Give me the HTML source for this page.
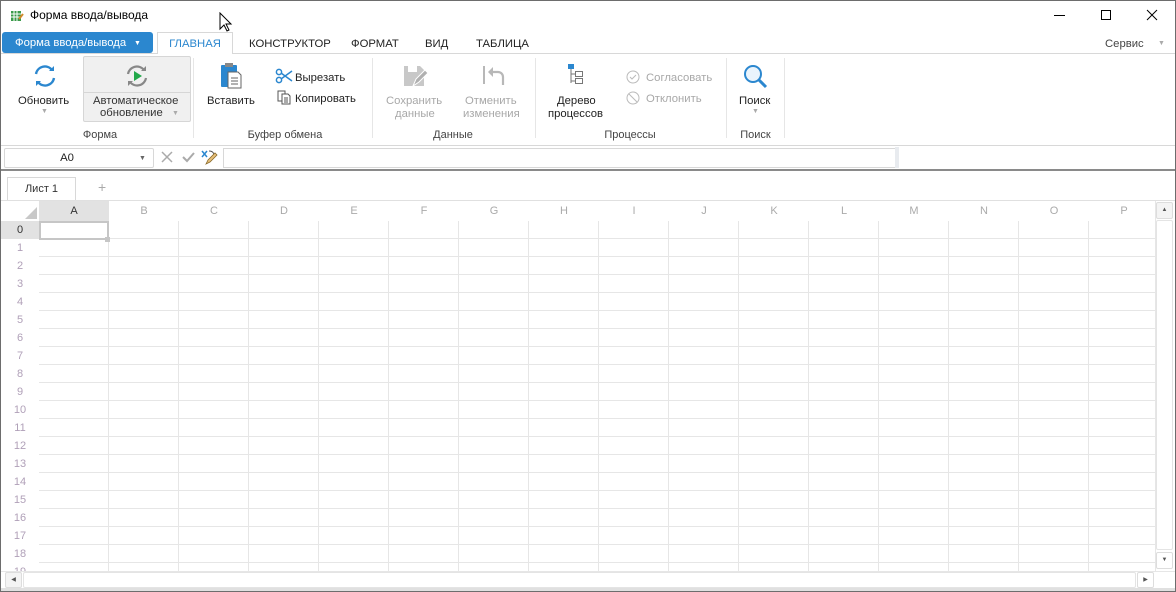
<!DOCTYPE html>
<html><head><meta charset="utf-8"><style>
*{box-sizing:border-box;margin:0;padding:0}
body{width:1176px;height:592px;overflow:hidden;background:#fff;font-family:"Liberation Sans","DejaVu Sans",sans-serif;font-size:11.3px;color:#222;position:relative}
.a{position:absolute}
.win{left:0;top:0;width:1176px;height:592px;border:1px solid #6d6d6d}
.t{white-space:nowrap}
.g{color:#a8a8a8}
.lab{color:#444;font-size:11px;text-align:center}
.sep{width:1px;background:#e6e6e6;top:58px;height:80px}
.ch{top:201px;width:70px;height:20px;line-height:20px;text-align:center;color:#aaa;font-size:11px}
.rh{left:1px;width:38px;height:18px;line-height:18px;text-align:center;color:#b0a0b8;font-size:11px}
</style></head><body>
<div class="a win"></div>
<svg class="a" style="left:10px;top:9px" width="14" height="14" viewBox="0 0 14 14"><rect x="1" y="2" width="10" height="10" fill="#3a9a4a"/><path d="M1 5h10M1 8h10M4 2v10M7 2v10" stroke="#fff" stroke-width="1"/><path d="M9 10l4-5" stroke="#d08a2a" stroke-width="2"/></svg>
<div class="a t" style="left:30px;top:8px;font-size:12px;color:#000">Форма ввода/вывода</div>
<svg class="a" style="left:219px;top:12px" width="14" height="22"><path d="M1 1v16l4-4 3 6 2-1-3-6h5z" fill="#fff" stroke="#000"/></svg>
<div class="a" style="left:1054px;top:15px;width:11px;height:1px;background:#000"></div>
<div class="a" style="left:1101px;top:10px;width:10px;height:10px;border:1px solid #000"></div>
<svg class="a" style="left:1146px;top:9px" width="12" height="12"><path d="M1 1l10 10M11 1L1 11" stroke="#000" stroke-width="1"/></svg>
<div class="a t" style="left:2px;top:32px;width:151px;height:21px;background:#2b87cf;border-radius:3px;color:#fff;line-height:22px;padding-left:13px">Форма ввода/вывода</div>
<div class="a" style="left:134px;top:40px;font-size:7px;color:#fff">▼</div>
<div class="a" style="left:157px;top:32px;width:76px;height:22px;border:1px solid #d8d8d8;border-bottom:none;background:#fff;color:#2b87cf;text-align:center;line-height:22px">ГЛАВНАЯ</div>
<div class="a" style="left:1px;top:53px;width:156px;height:1px;background:#d8d8d8"></div>
<div class="a" style="left:233px;top:53px;width:942px;height:1px;background:#d8d8d8"></div>
<div class="a t" style="left:249px;top:38px">КОНСТРУКТОР</div>
<div class="a t" style="left:351px;top:38px">ФОРМАТ</div>
<div class="a t" style="left:425px;top:38px">ВИД</div>
<div class="a t" style="left:476px;top:38px">ТАБЛИЦА</div>
<div class="a t" style="left:1105px;top:38px;color:#444">Сервис</div>
<div class="a" style="left:1158px;top:40px;font-size:7px;color:#aaa">▼</div>
<svg class="a" style="left:32px;top:63px" width="26" height="26" viewBox="0 0 26 26"><path d="M4 11a9 9 0 0 1 16-4" fill="none" stroke="#2b87cf" stroke-width="2.4"/><path d="M22 15a9 9 0 0 1-16 4" fill="none" stroke="#2b87cf" stroke-width="2.4"/><path d="M17 8l5 0 0-5z" fill="#2b87cf"/><path d="M9 18l-5 0 0 5z" fill="#2b87cf"/></svg>
<div class="a t" style="left:18px;top:95px">Обновить</div>
<div class="a" style="left:41px;top:108px;font-size:7px;color:#aaa">▼</div>
<div class="a" style="left:83px;top:56px;width:108px;height:66px;background:#f0f0f0;border:1px solid #d6d6d6;border-radius:2px"></div>
<div class="a" style="left:84px;top:92px;width:106px;height:1px;background:#d6d6d6"></div>
<svg class="a" style="left:124px;top:63px" width="26" height="26" viewBox="0 0 26 26"><path d="M4 11a9 9 0 0 1 16-4" fill="none" stroke="#888" stroke-width="2.2"/><path d="M22 15a9 9 0 0 1-16 4" fill="none" stroke="#888" stroke-width="2.2"/><path d="M17 8l5 0 0-5z" fill="#888"/><path d="M9 18l-5 0 0 5z" fill="#888"/><path d="M10 8v10l8-5z" fill="#22a84a"/></svg>
<div class="a t" style="left:93px;top:95px;color:#333">Автоматическое</div>
<div class="a t" style="left:100px;top:107px;color:#333">обновление</div>
<div class="a" style="left:172px;top:110px;font-size:7px;color:#aaa">▼</div>
<div class="a lab" style="left:60px;top:129px;width:80px">Форма</div>
<div class="a sep" style="left:193px"></div>
<svg class="a" style="left:219px;top:62px" width="24" height="28"><rect x="2" y="3" width="16" height="22" rx="1" fill="#2b87cf"/><rect x="6" y="1" width="8" height="4" fill="#888"/><path d="M9 10h10l3 3v13H9z" fill="#fff" stroke="#666"/><path d="M12 16h7M12 19h7M12 22h7" stroke="#666"/></svg>
<div class="a t" style="left:207px;top:95px">Вставить</div>
<svg class="a" style="left:275px;top:68px" width="18" height="16"><circle cx="4" cy="4" r="2.6" fill="none" stroke="#2b87cf" stroke-width="1.5"/><circle cx="4" cy="12" r="2.6" fill="none" stroke="#2b87cf" stroke-width="1.5"/><path d="M6 5l11 8M6 11l11-8" stroke="#2b87cf" stroke-width="1.5"/></svg>
<div class="a t" style="left:295px;top:72px">Вырезать</div>
<svg class="a" style="left:276px;top:89px" width="16" height="16"><path d="M2 2h7v10H2z" fill="#fff" stroke="#555"/><path d="M6 5h6l2 2v8H6z" fill="#fff" stroke="#555"/><path d="M8 9h4M8 11h4M8 13h4" stroke="#555"/></svg>
<div class="a t" style="left:295px;top:93px">Копировать</div>
<div class="a lab" style="left:230px;top:129px;width:110px">Буфер обмена</div>
<div class="a sep" style="left:372px"></div>
<svg class="a" style="left:403px;top:64px" width="26" height="26"><path d="M1 2h16l4 4v16H1z" fill="#c8c8c8"/><rect x="5" y="2" width="9" height="6" fill="#fff"/><path d="M10 22l3-7 9-9 3 3-9 9z" fill="#b0b0b0" stroke="#fff"/></svg>
<div class="a t g" style="left:386px;top:95px">Сохранить</div>
<div class="a t g" style="left:395px;top:108px">данные</div>
<svg class="a" style="left:482px;top:64px" width="24" height="24"><path d="M2 2v18" stroke="#b8b8b8" stroke-width="2"/><path d="M8 8h8a5 5 0 0 1 5 5v8" fill="none" stroke="#b8b8b8" stroke-width="2.2"/><path d="M6 8l5-5v10z" fill="#b8b8b8"/></svg>
<div class="a t g" style="left:465px;top:95px">Отменить</div>
<div class="a t g" style="left:463px;top:108px">изменения</div>
<div class="a lab" style="left:413px;top:129px;width:80px">Данные</div>
<div class="a sep" style="left:535px"></div>
<svg class="a" style="left:568px;top:64px" width="20" height="22"><rect x="0" y="0" width="6" height="5" fill="#2b87cf"/><path d="M3 5v14M3 10h4M3 17h4" stroke="#777" fill="none"/><rect x="7.5" y="7.5" width="7" height="5" fill="#fff" stroke="#777"/><rect x="7.5" y="14.5" width="7" height="5" fill="#fff" stroke="#777"/></svg>
<div class="a t" style="left:557px;top:95px">Дерево</div>
<div class="a t" style="left:548px;top:108px">процессов</div>
<svg class="a" style="left:626px;top:70px" width="14" height="14"><circle cx="7" cy="7" r="6" fill="none" stroke="#bbb"/><path d="M4 7l2 2 4-4" fill="none" stroke="#bbb"/></svg>
<div class="a t g" style="left:646px;top:72px">Согласовать</div>
<svg class="a" style="left:626px;top:91px" width="14" height="14"><circle cx="7" cy="7" r="6" fill="none" stroke="#bbb"/><path d="M3 3l8 8" stroke="#bbb"/></svg>
<div class="a t g" style="left:646px;top:93px">Отклонить</div>
<div class="a lab" style="left:590px;top:129px;width:80px">Процессы</div>
<div class="a sep" style="left:726px"></div>
<svg class="a" style="left:742px;top:63px" width="28" height="28"><circle cx="11" cy="11" r="8" fill="#eaf4fc" stroke="#2b87cf" stroke-width="2"/><path d="M17 17l7 7" stroke="#2b87cf" stroke-width="3"/></svg>
<div class="a t" style="left:739px;top:95px">Поиск</div>
<div class="a" style="left:752px;top:108px;font-size:7px;color:#aaa">▼</div>
<div class="a lab" style="left:733px;top:129px;width:45px">Поиск</div>
<div class="a sep" style="left:784px"></div>
<div class="a" style="left:1px;top:145px;width:1174px;height:1px;background:#d8d8d8"></div>
<div class="a" style="left:4px;top:148px;width:150px;height:20px;border:1px solid #d8d8d8;border-radius:2px;text-align:center;line-height:19px;padding-right:24px">А0</div>
<div class="a" style="left:139px;top:155px;font-size:7px;color:#666">▼</div>
<svg class="a" style="left:161px;top:151px" width="12" height="12"><path d="M1 1l10 10M11 1L1 11" stroke="#aaa" stroke-width="1.5"/></svg>
<svg class="a" style="left:182px;top:151px" width="13" height="12"><path d="M1 6l4 4 7-8" fill="none" stroke="#aaa" stroke-width="2"/></svg>
<svg class="a" style="left:200px;top:149px" width="18" height="17"><path d="M2 2l5 6M7 2L2 8" stroke="#2b87cf" stroke-width="1.5"/><path d="M9 2c5 0 5 4 5 4" stroke="#555" fill="none"/><path d="M6 15l2-4 7-7 2 2-7 7z" fill="#e8c07a" stroke="#8a6a2a" stroke-width=".8"/></svg>
<div class="a" style="left:223px;top:148px;width:673px;height:20px;border:1px solid #d8d8d8;border-right:none"></div>
<div class="a" style="left:895px;top:147px;width:4px;height:21px;background:#e8ebef"></div>
<div class="a" style="left:1px;top:169px;width:1174px;height:2px;background:#8a8a8a"></div>
<div class="a" style="left:7px;top:177px;width:69px;height:24px;border:1px solid #d8d8d8;border-bottom:none;background:#fff;text-align:center;line-height:22px;font-size:11px;color:#333">Лист 1</div>
<div class="a" style="left:98px;top:179px;color:#aaa;font-size:14px">+</div>
<div class="a" style="left:1px;top:200px;width:1174px;height:1px;background:#e0e0e0"></div>
<div class="a" style="left:39px;top:221px;width:1116px;height:350px;background-image:repeating-linear-gradient(to right,transparent 0 69px,#e6e6e6 69px 70px),repeating-linear-gradient(to bottom,transparent 0 17px,#e6e6e6 17px 18px)"></div>
<div class="a" style="left:39px;top:201px;width:70px;height:20px;background:#e2e2e2"></div>
<svg class="a" style="left:24px;top:206px" width="14" height="14"><path d="M13 1v12H1z" fill="#c8c8c8"/></svg>
<div class="a ch" style="left:39px;color:#333">A</div><div class="a ch" style="left:109px">B</div><div class="a ch" style="left:179px">C</div><div class="a ch" style="left:249px">D</div><div class="a ch" style="left:319px">E</div><div class="a ch" style="left:389px">F</div><div class="a ch" style="left:459px">G</div><div class="a ch" style="left:529px">H</div><div class="a ch" style="left:599px">I</div><div class="a ch" style="left:669px">J</div><div class="a ch" style="left:739px">K</div><div class="a ch" style="left:809px">L</div><div class="a ch" style="left:879px">M</div><div class="a ch" style="left:949px">N</div><div class="a ch" style="left:1019px">O</div><div class="a ch" style="left:1089px">P</div>
<div class="a rh" style="top:221px;background:#e2e2e2;color:#333">0</div>
<div class="a" style="left:39px;top:221px;width:70px;height:19px;border:2px solid #c6c6c6;background:#fff"></div>
<div class="a" style="left:105px;top:237px;width:5px;height:5px;background:#c6c6c6"></div>
<div class="a rh" style="top:239px">1</div><div class="a rh" style="top:257px">2</div><div class="a rh" style="top:275px">3</div><div class="a rh" style="top:293px">4</div><div class="a rh" style="top:311px">5</div><div class="a rh" style="top:329px">6</div><div class="a rh" style="top:347px">7</div><div class="a rh" style="top:365px">8</div><div class="a rh" style="top:383px">9</div><div class="a rh" style="top:401px">10</div><div class="a rh" style="top:419px">11</div><div class="a rh" style="top:437px">12</div><div class="a rh" style="top:455px">13</div><div class="a rh" style="top:473px">14</div><div class="a rh" style="top:491px">15</div><div class="a rh" style="top:509px">16</div><div class="a rh" style="top:527px">17</div><div class="a rh" style="top:545px">18</div><div class="a rh" style="top:563px;height:8px;overflow:hidden">19</div>
<div class="a" style="left:1155px;top:201px;width:20px;height:370px;background:#fff;border-left:1px solid #e6e6e6"></div>
<div class="a" style="left:1156px;top:202px;width:17px;height:17px;border:1px solid #ddd;border-radius:2px;background:#f4f4f4;font-size:6px;text-align:center;line-height:15px;color:#555">▲</div>
<div class="a" style="left:1156px;top:220px;width:17px;height:330px;border:1px solid #e4e4e4;border-radius:2px"></div>
<div class="a" style="left:1156px;top:552px;width:17px;height:17px;border:1px solid #ddd;border-radius:2px;background:#fff;font-size:6px;text-align:center;line-height:15px;color:#555">▼</div>
<div class="a" style="left:1px;top:571px;width:1174px;height:17px;background:#fff;border-top:1px solid #e6e6e6"></div>
<div class="a" style="left:5px;top:572px;width:17px;height:16px;border:1px solid #ddd;border-radius:2px;background:#f4f4f4;font-size:6px;text-align:center;line-height:14px;color:#555">◀</div>
<div class="a" style="left:23px;top:572px;width:1113px;height:16px;border:1px solid #e4e4e4;border-radius:2px"></div>
<div class="a" style="left:1137px;top:572px;width:17px;height:16px;border:1px solid #ddd;border-radius:2px;background:#fff;font-size:6px;text-align:center;line-height:14px;color:#555">▶</div>
<div class="a" style="left:1px;top:588px;width:1174px;height:3px;background:#e0e0e0"></div>
</body></html>
